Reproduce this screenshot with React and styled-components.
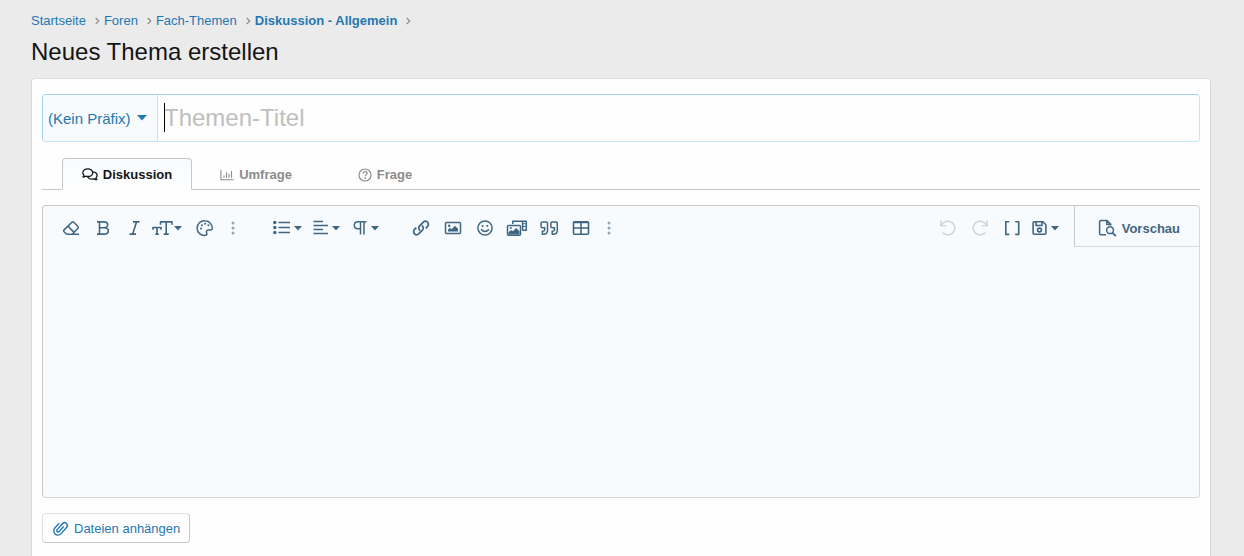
import React from 'react';
import styled, { createGlobalStyle, css } from 'styled-components';

const colors = {
  link: '#2577b1',
  tool: '#406681',
  toolMuted: '#8fa8ba',
  tint: '#f7fbfe',
  border: '#d8d8d8',
  borderHeavy: '#c8c8c8',
};

const GlobalStyle = createGlobalStyle`
  *, *::before, *::after {
    box-sizing: border-box;
  }

  body {
    margin: 0;
    background: #ebebeb;
    color: #141414;
    font-family: 'Liberation Sans', Arial, sans-serif;
    font-size: 15px;
    line-height: 20px;
  }

  button, input, select, textarea {
    font: inherit;
    color: inherit;
  }

  svg {
    display: block;
    flex-shrink: 0;
  }
`;

const Page = styled.main`
  padding: 11px 33px 0 31px;
`;

const Breadcrumbs = styled.ol`
  display: flex;
  flex-wrap: wrap;
  margin: 0;
  padding: 0;
  list-style: none;
  font-size: 13px;
`;

const Crumb = styled.li`
  display: flex;
  align-items: center;
  gap: 9px;
  margin-right: 4px;
  color: #8c8c8c;
`;

const CrumbLink = styled.a`
  color: ${colors.link};
  font-weight: ${props => (props.$current ? 700 : 400)};
  text-decoration: none;

  &:hover {
    text-decoration: underline;
  }
`;

const PageTitle = styled.h1`
  margin: 7px 0 12px;
  font-size: 24px;
  font-weight: 400;
  line-height: 28px;
`;

const Panel = styled.form`
  display: flex;
  flex-direction: column;
  gap: 15px;
  padding: 15px 10px 40px;
  background: #fefefe;
  border: 1px solid ${colors.border};
  border-top-color: #e0e0e0;
  border-radius: 4px;
`;

const TitleField = styled.div`
  display: flex;
  height: 48px;
  border: 1px solid #c8e2f5;
  border-top-color: #a0d0f3;
  border-left-color: #a8d4f3;
  border-radius: 4px;
  overflow: hidden;
`;

const PrefixPicker = styled.div`
  display: grid;
  align-items: center;
  background: ${colors.tint};
  border-right: 1px solid #c8e2f5;
  color: ${colors.link};

  > * {
    grid-area: 1 / 1;
  }

  svg {
    justify-self: end;
    margin-right: 10px;
    pointer-events: none;
  }
`;

const PrefixSelect = styled.select`
  height: 100%;
  padding: 2px 26px 0 5px;
  appearance: none;
  background: transparent;
  border: 0;
  outline: 0;
`;

const TitleInputWrap = styled.div`
  position: relative;
  flex: 1;
  display: flex;

  &::before {
    content: '';
    position: absolute;
    top: 8px;
    left: 6px;
    width: 1px;
    height: 29px;
    background: #000;
  }
`;

const TitleInput = styled.input`
  flex: 1;
  min-width: 0;
  padding: 0 6px;
  background: transparent;
  border: 0;
  outline: 0;
  font-size: 24px;

  &::placeholder {
    color: #bfbfbf;
    opacity: 1;
  }
`;

const TabList = styled.div`
  display: flex;
  height: 32px;
  margin-top: 1px;
  padding-left: 20px;
  border-bottom: 1px solid ${colors.borderHeavy};
`;

const Tab = styled.button`
  display: flex;
  align-items: center;
  justify-content: center;
  gap: 5px;
  width: 130px;
  height: 32px;
  margin-right: -1px;
  padding: 2px 0 0;
  background: none;
  border: 1px solid transparent;
  border-radius: 4px 4px 0 0;
  color: #8c8c8c;
  font-size: 13px;
  font-weight: 700;
  cursor: pointer;

  ${props => props.$active && css`
    background: linear-gradient(${colors.tint}, #fefefe);
    border-color: ${colors.borderHeavy};
    border-bottom-color: #fefefe;
    color: #141414;
  `}
`;

const Editor = styled.div`
  background: ${colors.tint};
  border: 1px solid ${colors.border};
  border-top-color: ${colors.borderHeavy};
  border-left-color: ${colors.borderHeavy};
  border-radius: 4px;
`;

const Toolbar = styled.div`
  display: flex;
  gap: 20px;
  padding-left: 12px;
  color: ${colors.tool};
`;

const ToolGroup = styled.div`
  display: flex;
  padding-top: 4px;

  ${props => props.$end && css`
    margin-left: auto;
    padding-right: 10px;
  `}
`;

const ToolButton = styled.button`
  display: flex;
  align-items: center;
  justify-content: center;
  width: 32px;
  height: 36px;
  padding: 0;
  background: none;
  border: 0;
  color: ${props => (props.$muted ? colors.toolMuted : 'inherit')};
  cursor: pointer;

  &:disabled {
    color: #d3d5d6;
    cursor: default;
  }
`;

const MoreButton = styled(ToolButton)`
  width: 24px;
`;

const MenuButton = styled(ToolButton)`
  justify-content: flex-start;
  gap: ${props => (props.$tight ? 1 : 4)}px;
  width: ${props => props.$width ?? 40}px;
  padding-left: ${props => props.$before ?? 8}px;
`;

const PreviewButton = styled.button`
  display: flex;
  align-items: center;
  gap: 5px;
  height: 41px;
  margin-left: -20px;
  padding: 4px 19px 0 23px;
  background: none;
  border: 0 solid ${colors.border};
  border-width: 0 0 1px 1px;
  border-left-color: ${colors.borderHeavy};
  color: inherit;
  font-size: 13px;
  line-height: 21px;
  font-weight: 700;
  cursor: pointer;
`;

const MessageArea = styled.textarea`
  display: block;
  width: 100%;
  height: 250px;
  padding: 20px;
  background: transparent;
  border: 0;
  outline: 0;
  resize: none;
`;

const AttachButton = styled.button`
  display: flex;
  align-items: center;
  align-self: flex-start;
  gap: 5px;
  height: 30px;
  padding: 2px 9px 0;
  background: #fefefe;
  border: 1px solid #e0e0e0;
  border-right-color: ${colors.borderHeavy};
  border-bottom-color: ${colors.borderHeavy};
  border-radius: 4px;
  color: ${colors.link};
  font-size: 13px;
  cursor: pointer;
`;

const Icon = ({ w = 18, h = 18, stroke = 1.5, children }) => (
  <svg
    width={w}
    height={h}
    viewBox={`0 0 ${w} ${h}`}
    fill="none"
    stroke="currentColor"
    strokeWidth={stroke}
    strokeLinejoin="round"
    aria-hidden="true"
  >
    {children}
  </svg>
);

const Caret = ({ w = 8, h = 5 }) => (
  <Icon w={w} h={h}>
    <path d={`M0 0H${w}L${w / 2} ${h - 0.5}Z`} fill="currentColor" stroke="none" />
  </Icon>
);

const Chevron = () => (
  <Icon w={5} h={8} stroke={1.1}>
    <path d="M.7 1 3.8 4 .7 7" />
  </Icon>
);

const CommentsIcon = () => (
  <Icon w={16} h={14} stroke={1.3}>
    <path d="M5.8.9C3 .9.8 2.5.8 4.7c0 1 .5 1.9 1.2 2.6-.2.8-.7 1.3-1 1.7 1.2 0 2.2-.4 2.9-.8.6.2 1.2.3 1.9.3 2.8 0 5-1.6 5-3.8S8.6.9 5.8.9Z" />
    <path d="M10.8 3.8c2.4.2 4.3 1.7 4.3 3.6 0 1-.5 1.9-1.2 2.6.2.8.7 1.3 1 1.7-1.2 0-2.2-.4-2.9-.8-.6.2-1.2.3-1.9.3-2 0-3.7-.9-4.5-2.2" />
  </Icon>
);

const ChartIcon = () => (
  <Icon w={14} h={12} stroke={1.1}>
    <path d="M.9 1v9.700H13.500M4 8.800V6.500M6.500 8.800V3.200M9 8.800V5M11.500 8.800V2" />
  </Icon>
);

const QuestionIcon = () => (
  <Icon w={14} h={14} stroke={1.2}>
    <circle cx="7" cy="7" r="6" />
    <path d="M5 5.5C5.2 4.3 6 3.7 7.1 3.7c1.1 0 2 .7 2 1.7 0 1.400-1.900 1.500-1.900 2.900" />
    <circle cx="7.2" cy="10.2" r=".9" fill="currentColor" stroke="none" />
  </Icon>
);

const EraserIcon = () => (
  <Icon>
    <path d="M6 15.2H17M10.2 15.2 15.9 9.500c.6-.6.6-1.300 0-1.900L11.800 3.300c-.6-.6-1.300-.6-1.900 0L2.100 10.900c-.6.6-.6 1.300 0 1.900l2.300 2.200.6.2h1M6 7.200l5.800 5.900" />
  </Icon>
);

const BoldIcon = () => (
  <Icon stroke={1.6}>
    <path d="M3 2.900h7c2.300 0 3.700 1.100 3.700 2.900S12.300 8.700 10 8.700H5.500M10 8.700c2.700 0 4.300 1.200 4.300 3.200s-1.600 3.200-4.300 3.200H3M5.500 3v12" />
  </Icon>
);

const ItalicIcon = () => (
  <Icon stroke={1.6}>
    <path d="M7 2.900h6.500M3.500 15.100h6.500M10.500 3 6.700 15" />
  </Icon>
);

const TextSizeIcon = () => (
  <Icon w={21} stroke={1.6}>
    <path d="M8.500 5.700V2.900h11.500v2.800M14.200 3v12M11.700 15.100h5M1 10.700V8.500h8v2.200M5 8.500V15M3.300 15.100h3.400" />
  </Icon>
);

const PaletteIcon = () => (
  <Icon>
    <path d="M9 1.800a7.300 7.300 0 1 0 .4 14.500c1.500-.1 1.800-1.500 1.200-2.600-.7-1.400.2-2.800 1.700-2.800h2.300c1 0 1.700-.6 1.700-1.700C16.200 5 13 1.800 9 1.800Z" />
    <g fill="currentColor" stroke="none">
      <circle cx="5" cy="9.5" r="1" />
      <circle cx="6" cy="6.2" r="1" />
      <circle cx="9.2" cy="4.8" r="1" />
      <circle cx="12.4" cy="6.3" r="1" />
    </g>
  </Icon>
);

const DotsIcon = () => (
  <Icon w={4} h={14}>
    <g fill="currentColor" stroke="none">
      <circle cx="2" cy="2" r="1.5" />
      <circle cx="2" cy="7" r="1.5" />
      <circle cx="2" cy="12" r="1.5" />
    </g>
  </Icon>
);

const ListIcon = () => (
  <Icon w={17}>
    <path d="M5.500 3.500h11.500M5.500 8.500h11.500M5.500 13.500h11.500" />
    <g fill="currentColor" stroke="none">
      <circle cx="1.8" cy="3.5" r="1.7" />
      <circle cx="1.8" cy="8.5" r="1.7" />
      <circle cx="1.8" cy="13.5" r="1.7" />
    </g>
  </Icon>
);

const AlignIcon = () => (
  <Icon w={15}>
    <path d="M.5 2.500h9.500M.5 6.500h14.500M.5 10.500h9.500M.5 14.500h14.500" />
  </Icon>
);

const ParagraphIcon = () => (
  <Icon w={14}>
    <path d="M13.500 2.800H5.300C2.800 2.800 1.300 4.300 1.300 6.300s1.500 3.500 4 3.500h2M7.500 3v12.500M11 3v12.500" />
  </Icon>
);

const LinkIcon = () => (
  <Icon stroke={1.7}>
    <path d="M8.200 11.600C6.500 10.300 6.300 8.300 7.600 6.900l3.500-3.600c1.300-1.300 3.200-1.300 4.400-.1s1.200 3.100-.1 4.400l-1.700 1.700" />
    <path d="M9.800 6.400c1.700 1.300 1.900 3.300.6 4.700l-3.500 3.600c-1.300 1.300-3.200 1.300-4.400.1s-1.200-3.100.1-4.400l1.700-1.700" />
  </Icon>
);

const ImageIcon = () => (
  <Icon>
    <rect x="1.5" y="3.5" width="15" height="11" rx="1" />
    <path d="M4 12.500v-1.800l2-2 1.500 1.500 3.500-3.500 3 3v2.800Z" fill="currentColor" stroke="none" />
    <circle cx="5.2" cy="6.7" r="1.2" fill="currentColor" stroke="none" />
  </Icon>
);

const SmileIcon = () => (
  <Icon>
    <circle cx="9" cy="9" r="7.1" />
    <path d="M5.500 10.700c1.800 2.300 5.200 2.300 7 0" strokeLinecap="round" />
    <circle cx="6.6" cy="7" r="1" fill="currentColor" stroke="none" />
    <circle cx="11.4" cy="7" r="1" fill="currentColor" stroke="none" />
  </Icon>
);

const MediaIcon = () => (
  <Icon w={22}>
    <path d="M6.700 5V2.200h13.600v9h-4.200M16.600 2v9" />
    <path d="M16.500 4.700h4M16.500 7.500h4" strokeWidth="1.1" />
    <rect x="1.5" y="6.5" width="13" height="9.8" rx="1" fill={colors.tint} />
    <path d="M2.500 15.500v-2.200l2.800-2.300 1.600 1.300 3.200-3.200 3.400 3.200v3.200Z" fill="currentColor" stroke="none" />
    <circle cx="4.8" cy="9" r="1" fill="currentColor" stroke="none" />
  </Icon>
);

const QuoteIcon = () => (
  <Icon w={20} stroke={1.5}>
    <path d="M8.500 8.600V4.200c0-.8-.5-1.300-1.300-1.300H3.400c-.8 0-1.300.5-1.300 1.300v3.300c0 .8.5 1.300 1.300 1.300h2.300v1.800c0 1-.7 1.600-1.700 1.600h-.6v3h1c2.500 0 4.100-1.600 4.100-4Z" />
    <path d="M18.300 8.600V4.200c0-.8-.5-1.300-1.300-1.300h-3.800c-.8 0-1.300.5-1.300 1.300v3.300c0 .8.5 1.300 1.300 1.300h2.300v1.800c0 1-.7 1.600-1.700 1.600h-.6v3h1c2.500 0 4.100-1.600 4.100-4Z" />
  </Icon>
);

const TableIcon = () => (
  <Icon stroke={1.6}>
    <rect x="1.5" y="2.8" width="15" height="12.5" rx="1" />
    <path d="M1.500 3.500h15M1.500 9h15M9 3v12" />
  </Icon>
);

const UndoIcon = () => (
  <Icon stroke={1.6}>
    <path d="M1.800 1.500v5.300h5.300M2.300 6.500C3.600 3.700 6 2.200 9 2.200a6.800 6.800 0 1 1-5.200 11.200" />
  </Icon>
);

const RedoIcon = () => (
  <Icon stroke={1.6}>
    <path d="M16.200 1.500v5.300h-5.300M15.700 6.500C14.400 3.700 12 2.200 9 2.200a6.800 6.800 0 1 0 5.200 11.200" />
  </Icon>
);

const BracketsIcon = () => (
  <Icon stroke={1.6}>
    <path d="M6.300 2.800H2.800v12.600h3.500M12.200 2.800h3.500v12.600h-3.500" />
  </Icon>
);

const SaveIcon = () => (
  <Icon w={15} stroke={1.6}>
    <path d="M2.300 2.800h8.600l3 3v8.200c0 .8-.4 1.200-1.200 1.200H2.300c-.8 0-1.200-.4-1.200-1.200V4c0-.8.4-1.200 1.200-1.200Z" />
    <path d="M4 3v3.500h6V3" />
    <circle cx="7.5" cy="11" r="1.9" />
  </Icon>
);

const PreviewIcon = () => (
  <Icon w={19}>
    <path d="M8 15.800H2.800c-.7 0-1.200-.5-1.200-1.200V2.800c0-.7.5-1.200 1.200-1.200H9l3.800 3.800v1.200M8.800 1.800v3.800h4" />
    <circle cx="12" cy="11.2" r="3.4" />
    <path d="m14.400 13.700 3.400 3.400" strokeWidth="1.8" />
  </Icon>
);

const PaperclipIcon = () => (
  <Icon w={17} h={18} stroke={1.4}>
    <path
      transform="translate(8.3 8.2) rotate(42)"
      d="M1.400-3.500V3.200a1.400 1.400 0 0 1-2.800 0V-4.800a2.800 2.800 0 0 1 5.600 0V3.500a4.200 4.200 0 0 1-8.400 0V-3"
    />
  </Icon>
);

const crumbs = ['Startseite', 'Foren', 'Fach-Themen', 'Diskussion - Allgemein'];

const threadTypes = [
  { label: 'Diskussion', icon: <CommentsIcon /> },
  { label: 'Umfrage', icon: <ChartIcon /> },
  { label: 'Frage', icon: <QuestionIcon /> },
];

const insertTools = [
  { label: 'Link einfügen', icon: <LinkIcon /> },
  { label: 'Bild einfügen', icon: <ImageIcon /> },
  { label: 'Smileys', icon: <SmileIcon /> },
  { label: 'Medien', icon: <MediaIcon /> },
  { label: 'Zitat', icon: <QuoteIcon /> },
  { label: 'Tabelle einfügen', icon: <TableIcon /> },
];

const EditorToolbar = () => (
  <Toolbar role="toolbar" aria-label="Formatierung">
    <ToolGroup>
      <ToolButton type="button" aria-label="Formatierung entfernen"><EraserIcon /></ToolButton>
      <ToolButton type="button" aria-label="Fett"><BoldIcon /></ToolButton>
      <ToolButton type="button" aria-label="Kursiv"><ItalicIcon /></ToolButton>
      <MenuButton type="button" aria-label="Schriftgröße" $tight $before={1} $width={38}>
        <TextSizeIcon />
        <Caret />
      </MenuButton>
      <ToolButton type="button" aria-label="Textfarbe"><PaletteIcon /></ToolButton>
      <MoreButton type="button" aria-label="Weitere Optionen" $muted><DotsIcon /></MoreButton>
    </ToolGroup>

    <ToolGroup>
      <MenuButton type="button" aria-label="Liste"><ListIcon /><Caret /></MenuButton>
      <MenuButton type="button" aria-label="Ausrichtung"><AlignIcon /><Caret /></MenuButton>
      <MenuButton type="button" aria-label="Absatzformat"><ParagraphIcon /><Caret /></MenuButton>
    </ToolGroup>

    <ToolGroup>
      {insertTools.map(tool => (
        <ToolButton key={tool.label} type="button" aria-label={tool.label}>
          {tool.icon}
        </ToolButton>
      ))}
      <MoreButton type="button" aria-label="Weitere Optionen" $muted><DotsIcon /></MoreButton>
    </ToolGroup>

    <ToolGroup $end>
      <ToolButton type="button" aria-label="Rückgängig" disabled><UndoIcon /></ToolButton>
      <ToolButton type="button" aria-label="Wiederholen" disabled><RedoIcon /></ToolButton>
      <ToolButton type="button" aria-label="BB-Code umschalten"><BracketsIcon /></ToolButton>
      <MenuButton type="button" aria-label="Entwürfe" $before={4} $width={36}><SaveIcon /><Caret /></MenuButton>
    </ToolGroup>

    <PreviewButton type="button">
      <PreviewIcon />
      Vorschau
    </PreviewButton>
  </Toolbar>
);

const App = () => (
  <>
    <GlobalStyle />
    <Page>
      <Breadcrumbs>
        {crumbs.map((crumb, index) => (
          <Crumb key={crumb}>
            <CrumbLink href="#" $current={index === crumbs.length - 1}>{crumb}</CrumbLink>
            <Chevron />
          </Crumb>
        ))}
      </Breadcrumbs>
      <PageTitle>Neues Thema erstellen</PageTitle>

      <Panel>
        <TitleField>
          <PrefixPicker>
            <PrefixSelect aria-label="Präfix">
              <option>(Kein Präfix)</option>
            </PrefixSelect>
            <Caret w={10} h={6} />
          </PrefixPicker>
          <TitleInputWrap>
            <TitleInput type="text" aria-label="Themen-Titel" placeholder="Themen-Titel" />
          </TitleInputWrap>
        </TitleField>

        <TabList role="tablist">
          {threadTypes.map((type, index) => (
            <Tab
              key={type.label}
              type="button"
              role="tab"
              aria-selected={index === 0}
              $active={index === 0}
            >
              {type.icon}
              {type.label}
            </Tab>
          ))}
        </TabList>

        <Editor>
          <EditorToolbar />
          <MessageArea aria-label="Nachricht" />
        </Editor>

        <AttachButton type="button">
          <PaperclipIcon />
          Dateien anhängen
        </AttachButton>
      </Panel>
    </Page>
  </>
);

export default App;
